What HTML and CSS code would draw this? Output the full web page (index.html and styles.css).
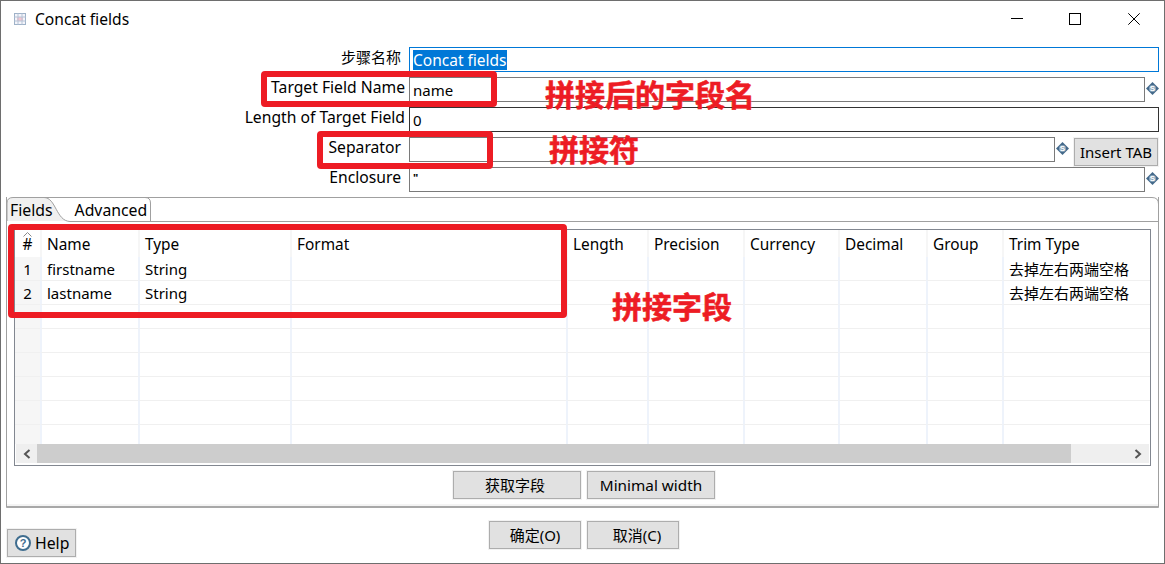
FILE: index.html
```html
<!DOCTYPE html>
<html lang="zh">
<head>
<meta charset="utf-8">
<title>Concat fields</title>
<link rel="stylesheet" href="styles.css">
</head>
<body>
<div class="window">
  <header class="titlebar">
    <svg class="app-icon" width="12" height="12" viewBox="0 0 12 12">
      <rect x=".5" y=".5" width="11" height="11" fill="#f4f4fa" stroke="#9fb2c8"/>
      <rect x="3" y="4" width="6" height="4" fill="#f6c6d0"/>
      <path d="M.5 4h11M.5 8h11M4 .5v11M8 .5v11" stroke="#b6c4d6" fill="none"/>
    </svg>
    <span class="title">Concat fields</span>
    <div class="controls">
      <svg class="ctl ctl-min" width="12" height="12" viewBox="0 0 12 12"><path d="M0 5.5h12" stroke="#000"/></svg>
      <svg class="ctl ctl-max" width="12" height="12" viewBox="0 0 12 12"><rect x=".5" y=".5" width="11" height="11" fill="none" stroke="#000"/></svg>
      <svg class="ctl ctl-close" width="12" height="12" viewBox="0 0 12 12"><path d="M.3.3l11.4 11.4M11.7.3.3 11.7" stroke="#000"/></svg>
    </div>
  </header>

  <section class="form">
    <div class="row">
      <label class="lbl lbl-inset lbl-cjk">步骤名称</label>
      <div class="field focus"><span class="sel">Concat fields</span></div>
    </div>
    <div class="row">
      <label class="lbl">Target Field Name</label>
      <div class="field">name</div>
      <svg class="var" viewBox="0 0 13 13"><path d="M6.500 0 13 6.500 6.500 13 0 6.500Z" fill="#44698a"/><circle cx="6.500" cy="6.500" r="3.500" fill="#8aa5bb"/><text x="6.500" y="9.300" text-anchor="middle" font-family="Liberation Sans" font-weight="700" font-size="8" fill="#fff">S</text></svg>
    </div>
    <div class="row">
      <label class="lbl">Length of Target Field</label>
      <div class="field dark">0</div>
    </div>
    <div class="row">
      <label class="lbl lbl-inset">Separator</label>
      <div class="field"></div>
      <svg class="var" viewBox="0 0 13 13"><path d="M6.500 0 13 6.500 6.500 13 0 6.500Z" fill="#44698a"/><circle cx="6.500" cy="6.500" r="3.500" fill="#8aa5bb"/><text x="6.500" y="9.300" text-anchor="middle" font-family="Liberation Sans" font-weight="700" font-size="8" fill="#fff">S</text></svg>
      <button class="btn btn-tab">Insert TAB</button>
    </div>
    <div class="row">
      <label class="lbl lbl-inset">Enclosure</label>
      <div class="field enc">"</div>
      <svg class="var" viewBox="0 0 13 13"><path d="M6.500 0 13 6.500 6.500 13 0 6.500Z" fill="#44698a"/><circle cx="6.500" cy="6.500" r="3.500" fill="#8aa5bb"/><text x="6.500" y="9.300" text-anchor="middle" font-family="Liberation Sans" font-weight="700" font-size="8" fill="#fff">S</text></svg>
    </div>
  </section>

  <section class="folder">
    <div class="tabs">
      <svg class="tab-art" width="1153" height="25" viewBox="0 0 1153 25">
        <path d="M1 24V6Q1 .5 7 .5H38C50 .5 50 24 64 24Z" fill="#f0f0f0"/>
        <path d="M1 24V6Q1 .5 7 .5H1146Q1152.500 .5 1152.500 7" fill="none" stroke="#a0a0a0"/>
        <path d="M38 .5C50 .5 50 24 64 24.500H1152.500M144.500 24V6Q144.500 .5 139 .5" fill="none" stroke="#a0a0a0"/>
      </svg>
      <span class="tab tab-fields">Fields</span>
      <span class="tab tab-adv">Advanced</span>
    </div>
    <div class="panel">
      <div class="grid-frame">
        <table class="grid">
          <colgroup>
            <col class="c0"><col class="c1"><col class="c2"><col class="c3"><col class="c4">
            <col class="c5"><col class="c6"><col class="c7"><col class="c8"><col class="c9">
          </colgroup>
          <thead>
            <tr>
              <th class="num">#</th><th>Name</th><th>Type</th><th>Format</th><th>Length</th>
              <th>Precision</th><th>Currency</th><th>Decimal</th><th>Group</th><th>Trim Type</th>
            </tr>
          </thead>
          <tbody>
            <tr><td class="num">1</td><td>firstname</td><td>String</td><td></td><td></td><td></td><td></td><td></td><td></td><td>去掉左右两端空格</td></tr>
            <tr><td class="num">2</td><td>lastname</td><td>String</td><td></td><td></td><td></td><td></td><td></td><td></td><td>去掉左右两端空格</td></tr>
            <tr><td class="num"></td><td></td><td></td><td></td><td></td><td></td><td></td><td></td><td></td><td></td></tr>
            <tr><td class="num"></td><td></td><td></td><td></td><td></td><td></td><td></td><td></td><td></td><td></td></tr>
            <tr><td class="num"></td><td></td><td></td><td></td><td></td><td></td><td></td><td></td><td></td><td></td></tr>
            <tr><td class="num"></td><td></td><td></td><td></td><td></td><td></td><td></td><td></td><td></td><td></td></tr>
            <tr><td class="num"></td><td></td><td></td><td></td><td></td><td></td><td></td><td></td><td></td><td></td></tr>
            <tr class="last"><td class="num"></td><td></td><td></td><td></td><td></td><td></td><td></td><td></td><td></td><td></td></tr>
          </tbody>
        </table>
        <svg class="sort" width="9" height="5" viewBox="0 0 9 5"><path d="M.5 4.500 4.500.5l4 4" fill="none" stroke="#8a8a8a"/></svg>
        <div class="hscroll">
          <div class="sb-btn sb-left"><svg width="8" height="10" viewBox="0 0 8 10"><path d="M6.500 1 2 5l4.500 4" fill="none" stroke="#555" stroke-width="2"/></svg></div>
          <div class="sb-thumb"></div>
          <div class="sb-btn sb-right"><svg width="8" height="10" viewBox="0 0 8 10"><path d="M1.500 1 6 5 1.500 9" fill="none" stroke="#555" stroke-width="2"/></svg></div>
        </div>
      </div>
      <div class="panel-actions">
        <button class="btn btn-wide btn-get">获取字段</button>
        <button class="btn btn-wide btn-min">Minimal width</button>
      </div>
    </div>
  </section>

  <footer class="footer">
    <button class="btn btn-help">
      <svg width="16" height="16" viewBox="0 0 16 16">
        <circle cx="8" cy="8" r="7" fill="#fff" stroke="#3f6d8f" stroke-width="2"/>
        <text x="8" y="12" text-anchor="middle" font-family="Liberation Sans" font-weight="700" font-size="11" fill="#3f6d8f">?</text>
      </svg>
      <span>Help</span>
    </button>
    <div class="ok-group">
      <button class="btn btn-ok">确定(O)</button>
      <button class="btn btn-ok btn-cancel">取消(C)</button>
    </div>
  </footer>

  <div class="mark mark-target"></div>
  <div class="mark mark-sep"></div>
  <div class="mark mark-table"></div>
  <div class="note note-target">拼接后的字段名</div>
  <div class="note note-sep">拼接符</div>
  <div class="note note-table">拼接字段</div>
</div>
</body>
</html>
```
FILE: styles.css
```css
* { box-sizing: border-box; }
html, body { margin: 0; padding: 0; background: #fff; }
body {
  font-family: "Noto Sans", "Noto Sans CJK SC", sans-serif;
  font-size: 15px;
  color: #000;
  overflow: hidden;
}

.window {
  position: relative;
  width: 1165px;
  height: 564px;
  border: 1px solid #6e6e6e;
  background: #fff;
  display: flex;
  flex-direction: column;
}

.titlebar {
  height: 46px;
  flex: none;
  display: flex;
  align-items: flex-start;
  padding: 12px 0 0 13px;
}
.app-icon { flex: none; }
.title { margin-left: 9px; line-height: 12px; font-size: 15.6px; }
.controls { margin-left: auto; display: flex; padding-right: 24px; }
.ctl { display: block; }
.ctl-max { margin-left: 46px; }
.ctl-close { margin-left: 47px; }

.form { display: flex; flex-direction: column; gap: 5px; padding-right: 5px; }
.row { display: flex; height: 25px; }
.lbl {
  width: 404px;
  flex: none;
  text-align: right;
  line-height: 20px;
  margin-right: 4px;
  font-size: 15.7px;
}
.lbl-inset { padding-right: 4px; }
.lbl-cjk { font-size: 15px; }
.field {
  flex: 1;
  height: 25px;
  border: 1px solid #7a7a7a;
  padding-left: 3px;
  line-height: 25px;
}
.field.focus { border-color: #0078d7; }
.field.dark { border-color: #333; }
.field.enc { font-size: 11px; line-height: 20px; font-weight: 700; }
.sel {
  display: inline-block;
  background: #0078d7;
  color: #fff;
  line-height: 20px;
  margin-top: 2px;
  vertical-align: top;
  font-size: 15.5px;
}
.var { width: 13px; height: 13px; flex: none; margin: 5px 0 0 1px; }

.btn {
  font: inherit;
  color: #000;
  background: #e1e1e1;
  border: 1px solid #adadad;
  box-shadow: 0 0 0 1px #f2f2f2;
  padding: 0;
  height: 28px;
  line-height: 24px;
}
.btn-tab { width: 84px; flex: none; margin: 1px 1px 0 5px; }

.folder {
  flex: none;
  height: 311px;
  margin: 5px 5px 0;
  display: flex;
  flex-direction: column;
  border: 1px solid #a0a0a0;
  border-top: 0;
  border-bottom: 2px solid #a8a8a8;
  border-radius: 0 0 1px 1px;
}
.tabs {
  position: relative;
  height: 25px;
  flex: none;
  display: flex;
  padding-top: 2px;
}
.tab-art { position: absolute; left: -1px; top: 0; }
.tab { position: relative; line-height: 22px; font-size: 15.8px; }
.tab-fields { margin-left: 3px; }
.tab-adv { margin-left: 22px; }

.panel { flex: 1; padding: 7px 7px 0; display: flex; flex-direction: column; background: #fff; box-shadow: inset 0 -2px 0 #f4f4f4; }

.grid-frame {
  position: relative;
  height: 237px;
  flex: none;
  border: 1px solid #828790;
  padding-bottom: 2px;
  display: flex;
  flex-direction: column;
}
.grid { border-collapse: separate; border-spacing: 0; table-layout: fixed; width: 1135px; flex: none; }
.c0 { width: 25px; } .c1 { width: 98px; } .c2 { width: 152px; } .c3 { width: 276px; }
.c4 { width: 81px; } .c5 { width: 96px; } .c6 { width: 95px; } .c7 { width: 88px; }
.c8 { width: 76px; } .c9 { width: 148px; }
.grid th, .grid td { padding: 0 0 0 5px; text-align: left; font-weight: 400; white-space: nowrap; overflow: hidden; }
.grid th {
  height: 27px;
  padding-top: 2px;
  line-height: 25px;
  border-left: 2px solid #f6f6f6;
  font-size: 15.4px;
}
.grid td {
  height: 24px;
  padding-top: 1px;
  line-height: 22px;
  border-left: 2px solid #eef3fb;
  border-bottom: 1px solid #f0f0f0;
}
.grid tr.last td { height: 19px; padding-top: 0; border-bottom: 0; line-height: 18px; }
.grid th.num, .grid td.num { padding-left: 0; text-align: center; border-left: 0; }
.grid td.num { background: #f6f6f6; }
.sort { position: absolute; left: 8px; top: 2px; }

.hscroll { height: 19px; flex: none; display: flex; padding: 0 1px; }
.sb-btn { background: #efefef; display: flex; align-items: center; }
.sb-left { width: 21px; justify-content: center; }
.sb-thumb { width: 1034px; background: #cdcdcd; }
.sb-right { flex: 1; justify-content: flex-end; padding-right: 7px; }

.panel-actions { display: flex; justify-content: center; gap: 6px; margin-top: 5px; padding-left: 3px; }
.btn-wide { width: 128px; }
.btn-get { padding-right: 4px; }
.btn-min { font-size: 15.3px; }

.footer { flex: 1; display: flex; align-items: flex-start; padding: 13px 0 0 6px; }
.btn-help {
  width: 69px;
  margin-top: 8px;
  display: flex;
  align-items: center;
  gap: 4px;
  padding-left: 7px;
  font-size: 15.8px;
}
.btn-help svg { flex: none; }
.ok-group { display: flex; gap: 6px; margin-left: 413px; }
.btn-ok { width: 92px; }
.btn-cancel { padding-left: 8px; }

.mark {
  position: absolute;
  border: 6px solid #ed1c24;
  border-radius: 4px;
  pointer-events: none;
}
.mark-target { left: 260px; top: 70px; width: 236px; height: 36px; }
.mark-sep { left: 316px; top: 130px; width: 176px; height: 38px; }
.mark-table { left: 7px; top: 223px; width: 559px; height: 94px; }

.note {
  position: absolute;
  color: #ed1c24;
  font-family: "Noto Sans CJK SC", sans-serif;
  font-weight: 700;
  font-size: 30px;
  line-height: 30px;
  white-space: nowrap;
  -webkit-text-stroke: 0.6px #ed1c24;
}
.note-target { left: 544px; top: 77px; }
.note-sep { left: 548px; top: 132px; }
.note-table { left: 611px; top: 289px; }
```
